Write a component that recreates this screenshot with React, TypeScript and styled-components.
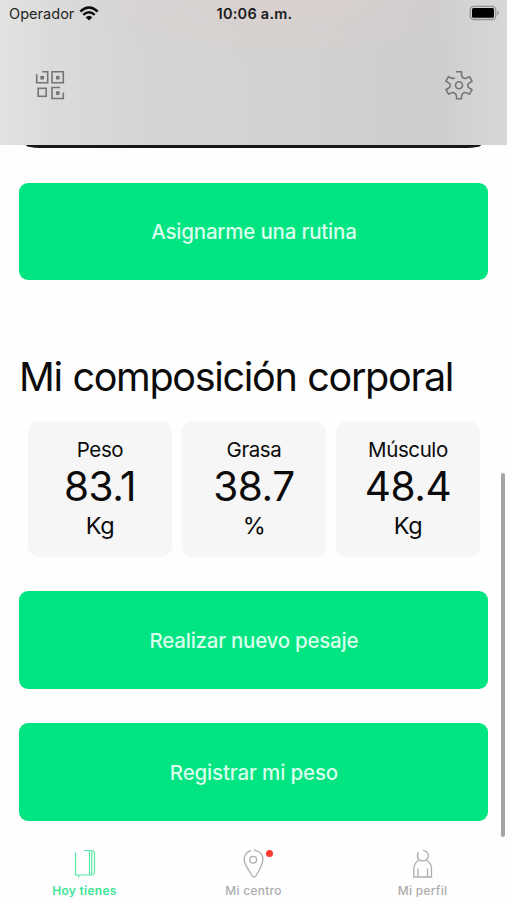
import React from "react";
import styled, { createGlobalStyle, css } from "styled-components";

const GlobalStyle = createGlobalStyle`
  * { box-sizing: border-box; }
  body { margin: 0; background: #fff; font-family: Inter, "Liberation Sans", sans-serif; color: #0b0b0b; }
`;

const Screen = styled.div`
  width: 507px;
  height: 900px;
  overflow: hidden;
  position: relative;
  display: flex;
  flex-direction: column;
  background: #fefefe;
`;

const Header = styled.header`
  height: 145px;
  flex: none;
  background:
    radial-gradient(ellipse 230px 62px at 57% 0, rgba(221, 207, 207, 0.65), transparent),
    linear-gradient(90deg, #e2e2e1 0, #dbdbda 10%, #d5d5d4 28%, #d2d2d0 58%, #cdcdcd 85%, #d8d8d8 100%);
`;

const StatusBar = styled.div`
  height: 27px;
  display: grid;
  grid-template-columns: 1fr auto 1fr;
  align-items: center;
  padding: 0 7px 0 9px;
`;

const Carrier = styled.span`
  display: flex;
  align-items: center;
  gap: 5px;
  font-size: 14.5px;
  letter-spacing: 0.04px;
  color: #252525;
`;

const Time = styled.span`
  font-size: 14.5px;
  font-weight: 600;
  letter-spacing: 0.24px;
  color: #1b1b1b;
`;

const Battery = styled.span`
  justify-self: end;
  display: flex;
  margin-top: -1px;
`;

const Toolbar = styled.div`
  height: 116px;
  padding: 0 34px 0 35px;
  display: flex;
  align-items: center;
  justify-content: space-between;
  color: #747474;
`;

const IconButton = styled.button`
  display: flex;
  padding: 0;
  border: 0;
  background: none;
  color: inherit;
`;

const CardEdge = styled.div`
  flex: none;
  height: 3px;
  margin: 0 26px 34.5px;
  border-radius: 0 0 14px 14px / 0 0 3px 3px;
  background: #151917;
`;

const ActionButton = styled.button<{ $track: number; $after: number }>`
  flex: none;
  height: 97.5px;
  margin: 0 18.6px ${(p) => p.$after}px 19.4px;
  padding: 2px 0 0;
  border: 0;
  border-radius: 9px;
  background: #00e582;
  color: #d9ffec;
  font: 540 20.5px/26px Inter, sans-serif;
  letter-spacing: ${(p) => p.$track}px;
`;

const Title = styled.h1`
  flex: none;
  margin: 0 0 18.5px 19px;
  font-size: 39.6px;
  line-height: 50px;
  font-weight: 400;
  letter-spacing: -1.34px;
  word-spacing: 1px;
  white-space: nowrap;
`;

const Metrics = styled.div`
  flex: none;
  display: grid;
  grid-template-columns: repeat(3, 144.4px);
  gap: 9.6px;
  margin: 0 0 34.5px 27.8px;
`;

const Metric = styled.article`
  height: 136px;
  padding-top: 16px;
  border-radius: 11px;
  background: #f6f6f6;
  display: flex;
  flex-direction: column;
  align-items: center;
`;

const MetricLabel = styled.span`
  font-size: 20.5px;
  line-height: 26px;
  font-weight: 440;
  letter-spacing: -0.4px;
`;

const MetricValue = styled.span`
  font-size: 40.5px;
  line-height: 48px;
  letter-spacing: -0.4px;
`;

const MetricUnit = styled.span`
  font-size: 23.5px;
  line-height: 29px;
  font-weight: 440;
  letter-spacing: -0.5px;
`;

const Scrollbar = styled.div`
  position: absolute;
  right: 2px;
  top: 473px;
  width: 4px;
  height: 364px;
  border-radius: 2px;
  background: #a5a5a5;
`;

const TabBar = styled.nav`
  flex: none;
  height: 79.5px;
  display: grid;
  grid-template-columns: repeat(3, 1fr);
`;

const Tab = styled.a<{ $active?: boolean }>`
  display: flex;
  flex-direction: column;
  align-items: center;
  padding-top: 25px;
  color: #adadad;
  font-size: 12px;
  line-height: 16px;
  font-weight: 500;
  letter-spacing: 0.28px;
  ${(p) => p.$active && css`color: #3fe596; font-weight: 600;`}
`;

const TabIcon = styled.span`
  position: relative;
  display: flex;
  height: 36px;
  margin-bottom: 1px;
`;

const Badge = styled.i`
  position: absolute;
  left: 24px;
  top: 4px;
  width: 7px;
  height: 7px;
  border-radius: 50%;
  background: #fb3b30;
`;

const WifiIcon = () => (
  <svg width="20" height="15" viewBox="0 0 20 15" fill="none" stroke="#0b0b0b" strokeWidth="2.4">
    <path d="M1.3 5.5Q10-2.5 18.7 5.5" />
    <path d="M4.3 8.9Q10 3.7 15.7 8.9" />
    <path d="M6.7 11.2Q10 8.2 13.3 11.2L10 14.4Z" fill="#0b0b0b" stroke="none" />
  </svg>
);

const BatteryIcon = () => (
  <svg width="31" height="16" viewBox="0 0 31 16">
    <rect x="1.3" y="1.3" width="25.4" height="13.2" rx="3.6" fill="none" stroke="#939393" strokeWidth="1.3" />
    <rect x="3" y="3" width="22" height="9.8" rx="1.6" fill="#000" />
    <path d="M28.2 5.5Q31.6 8 28.2 10.4Z" fill="#999" />
  </svg>
);

const QrIcon = () => (
  <svg width="30" height="30" viewBox="0 0 30 30" fill="none" stroke="currentColor" strokeWidth="1.6">
    <path d="M1.7 4.3V12.7H12.7V1.7H7.2" />
    <path d="M17 1.7H28.3V12.7H17Z" />
    <rect x="3.2" y="18.3" width="8" height="8" />
    <path d="M25 17.5H17V28.5H28.3V22.5" />
    <g fill="currentColor" stroke="none">
      <rect x="5.4" y="5.9" width="3.6" height="3.6" />
      <rect x="21" y="5.9" width="3.6" height="3.6" />
      <rect x="21" y="21.3" width="3.6" height="3.6" />
    </g>
  </svg>
);

const GearIcon = () => (
  <svg width="28" height="30" viewBox="0 0 28 30" fill="none" stroke="currentColor" strokeWidth="1.6" strokeLinejoin="round">
    <path d="M11.1 1.7H16.5V4.9Q16.7 7.4 19.3 8.3Q20.5 8.7 21.9 7.9L24.5 6.7L27 11.2L24.3 12.9Q22.7 14 22.7 15.4Q22.7 16.9 24.3 18L27 19.7L24.5 24.2L21.9 22.9Q20.5 22.1 19.1 22.7Q16.7 23.7 16.5 26V28.7H11.5V26Q11.3 23.7 8.9 22.7Q7.5 22.1 6.1 22.9L3.5 24.2L1 19.7L3.7 18Q5.3 16.9 5.3 15.4Q5.3 14 3.7 12.9L1 11.2L3.5 6.7L6.1 7.9Q8 8.8 10 8" />
    <circle cx="14" cy="15.2" r="3.5" />
  </svg>
);

const BookIcon = () => (
  <svg width="24" height="36" viewBox="0 0 24 36" fill="none" stroke="currentColor" strokeWidth="1.2" opacity=".85">
    <path d="M2.5 6.5V29H16.5M11 4.5H18Q21.5 4.5 21.5 8V25.5Q21.5 29 18 29H16.5V4.5" />
    <path d="M18.7 5.5V28.4M5.7 29V31.5" />
  </svg>
);

const PinIcon = () => (
  <svg width="24" height="36" viewBox="0 0 24 36" fill="none" stroke="currentColor" strokeWidth="1.3">
    <path d="M9 4.6Q2.2 6.4 2.2 13.5C2.2 18.8 6.3 23 8.8 27.8Q10.5 31.1 12 31.1Q13.5 31.1 15.2 27.8C17.7 23 20.8 18.8 20.8 13.5Q20.8 7.2 15.5 5L12 4.2" />
    <circle cx="11.2" cy="13.7" r="3.4" />
  </svg>
);

const PersonIcon = () => (
  <svg width="24" height="36" viewBox="0 0 24 36" fill="none" stroke="currentColor" strokeWidth="1.3">
    <path d="M7.5 6.2C4.9 10.5 7.3 14.9 11.5 14.9C15.1 14.9 17.5 12.2 17.3 9.2Q16.9 5.2 12 4.3" />
    <path d="M7.8 14.2Q2.8 17 2.8 23.4V31H20.5V23.4Q20.5 17 15.5 14.2M7 22.5V31M16.5 22.5V31" />
  </svg>
);

const metrics = [
  { label: "Peso", value: "83.1", unit: "Kg" },
  { label: "Grasa", value: "38.7", unit: "%" },
  { label: "Músculo", value: "48.4", unit: "Kg" },
];

export default function App() {
  return (
    <>
      <GlobalStyle />
      <Screen>
        <Header>
          <StatusBar>
            <Carrier>Operador <WifiIcon /></Carrier>
            <Time>10:06 a.m.</Time>
            <Battery><BatteryIcon /></Battery>
          </StatusBar>
          <Toolbar>
            <IconButton aria-label="Código QR"><QrIcon /></IconButton>
            <IconButton aria-label="Ajustes"><GearIcon /></IconButton>
          </Toolbar>
        </Header>
        <CardEdge />
        <ActionButton $track={-0.2} $after={72}>Asignarme una rutina</ActionButton>
        <Title>Mi composición corporal</Title>
        <Metrics>
          {metrics.map((m) => (
            <Metric key={m.label}>
              <MetricLabel>{m.label}</MetricLabel>
              <MetricValue>{m.value}</MetricValue>
              <MetricUnit>{m.unit}</MetricUnit>
            </Metric>
          ))}
        </Metrics>
        <ActionButton $track={-0.25} $after={34.5}>Realizar nuevo pesaje</ActionButton>
        <ActionButton $track={-0.15} $after={0}>Registrar mi peso</ActionButton>
        <TabBar>
          <Tab $active><TabIcon><BookIcon /></TabIcon>Hoy tienes</Tab>
          <Tab><TabIcon><PinIcon /><Badge /></TabIcon>Mi centro</Tab>
          <Tab><TabIcon><PersonIcon /></TabIcon>Mi perfil</Tab>
        </TabBar>
        <Scrollbar />
      </Screen>
    </>
  );
}
